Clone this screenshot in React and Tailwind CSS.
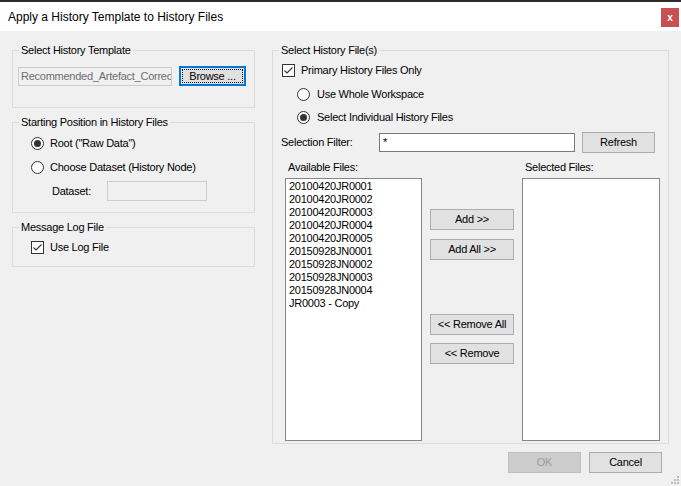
import React from "react";

const files = [
  "20100420JR0001",
  "20100420JR0002",
  "20100420JR0003",
  "20100420JR0004",
  "20100420JR0005",
  "20150928JN0001",
  "20150928JN0002",
  "20150928JN0003",
  "20150928JN0004",
  "JR0003 - Copy",
];

function Radio({ checked }) {
  return (
    <span className="w-[13px] h-[13px] rounded-full border border-[#333333] bg-white flex items-center justify-center shrink-0">
      {checked && <span className="w-[7px] h-[7px] rounded-full bg-[#333333]" />}
    </span>
  );
}

function Check() {
  return (
    <span className="w-[13px] h-[13px] border border-[#333333] bg-white flex items-center justify-center shrink-0">
      <svg width="11" height="11" viewBox="0 0 11 11">
        <path d="M1.5 5.5 L4 8 L9.5 2.5" fill="none" stroke="#333333" strokeWidth="1.1" />
      </svg>
    </span>
  );
}

function Btn({ children, className = "" }) {
  return (
    <button className={`h-[21px] bg-[#e1e1e1] border border-[#adadad] text-black flex items-center justify-center shrink-0 ${className}`}>
      {children}
    </button>
  );
}

function Group({ title, className = "", children }) {
  return (
    <fieldset className={`border border-[#dcdcdc] shrink-0 ${className}`}>
      <legend className="ml-[6px] px-[2px] leading-[14px] text-black">{title}</legend>
      {children}
    </fieldset>
  );
}

export default function App() {
  return (
    <div className="relative w-[681px] h-[486px] bg-[#f0f0f0] flex flex-col overflow-hidden text-[11px] text-black font-['Liberation_Sans',Arial,sans-serif]">
      <div className="h-[2px] bg-[#2b2b2b] shrink-0" />
      <div className="h-[29px] bg-white flex justify-between shrink-0">
        <span className="pl-[8px] self-center text-[12px]">Apply a History Template to History Files</span>
        <span className="mt-[6px] mr-[2px] w-[18px] h-[19px] bg-[#c75050] text-white text-[10px] font-bold flex items-center justify-center">
          x
        </span>
      </div>

      <div className="flex tracking-[-0.25px]">
        {/* left column */}
        <div className="flex flex-col ml-[12px] mt-[12px] w-[243px]">
          <Group title="Select History Template" className="h-[65px]">
            <div className="mt-[9px] h-[20px] pl-[5px] flex items-center gap-[7px]">
              <div className="w-[154px] h-[19px] border border-[#cccccc] bg-[#f0f0f0] pl-[2px] text-[#6d6d6d] overflow-hidden whitespace-nowrap leading-[17px]">
                Recommended_Artefact_Correc
              </div>
              <button className="w-[67px] h-[20px] border-2 border-[#0078d7] bg-[#e1e1e1] p-[1px] shrink-0">
                <span className="w-full h-full border border-dotted border-black flex items-center justify-center">
                  Browse ...
                </span>
              </button>
            </div>
          </Group>

          <Group title="Starting Position in History Files" className="h-[98px] mt-[7px]">
            <div className="mt-[2px] flex flex-col">
              <div className="h-[24px] pl-[18px] flex items-center gap-[6px]">
                <Radio checked />
                <span>Root ("Raw Data")</span>
              </div>
              <div className="h-[24px] pl-[18px] flex items-center gap-[6px]">
                <Radio />
                <span>Choose Dataset (History Node)</span>
              </div>
              <div className="h-[24px] pl-[39px] flex items-center">
                <span className="w-[55px]">Dataset:</span>
                <div className="w-[100px] h-[20px] border border-[#cccccc] bg-[#f0f0f0]" />
              </div>
            </div>
          </Group>

          <Group title="Message Log File" className="h-[47px] mt-[7px]">
            <div className="mt-[7px] h-[13px] pl-[18px] flex items-center gap-[6px]">
              <Check />
              <span>Use Log File</span>
            </div>
          </Group>
        </div>

        {/* right group */}
        <Group title="Select History File(s)" className="ml-[17px] mt-[12px] w-[397px] h-[401px]">
          <div className="flex flex-col">
            <div className="mt-[5px] h-[16px] pl-[9px] flex items-center gap-[6px]">
              <Check />
              <span>Primary History Files Only</span>
            </div>
            <div className="mt-[5px] h-[23px] pl-[24px] flex items-center gap-[7px]">
              <Radio />
              <span>Use Whole Workspace</span>
            </div>
            <div className="h-[23px] pl-[24px] flex items-center gap-[7px]">
              <Radio checked />
              <span>Select Individual History Files</span>
            </div>
            <div className="mt-[3px] h-[20px] pl-[8px] flex items-center">
              <span className="w-[98px]">Selection Filter:</span>
              <div className="w-[196px] h-[19px] border border-[#7a7a7a] bg-white pl-[3px] leading-[17px]">*</div>
              <Btn className="ml-[7px] w-[73px] h-[20px]">Refresh</Btn>
            </div>
            <div className="mt-[8px] h-[14px] pl-[15px] flex items-center">
              <span className="w-[237px]">Available Files:</span>
              <span>Selected Files:</span>
            </div>
            <div className="mt-[4px] h-[263px] pl-[12px] flex gap-[8px]">
              <div className="w-[137px] h-full border border-[#828790] bg-white pl-[3px] pt-[1px] flex flex-col">
                {files.map((f) => (
                  <span key={f} className="leading-[13px] whitespace-nowrap">
                    {f}
                  </span>
                ))}
              </div>
              <div className="w-[84px] flex flex-col">
                <Btn className="mt-[31px] w-[84px]">Add &gt;&gt;</Btn>
                <Btn className="mt-[9px] w-[84px]">Add All &gt;&gt;</Btn>
                <Btn className="mt-[54px] w-[84px]">&lt;&lt; Remove All</Btn>
                <Btn className="mt-[8px] w-[84px]">&lt;&lt; Remove</Btn>
              </div>
              <div className="w-[138px] h-full border border-[#828790] bg-white" />
            </div>
          </div>
        </Group>
      </div>

      <div className="mt-[8px] pr-[19px] flex justify-end gap-[8px] tracking-[-0.25px]">
        <button className="w-[73px] h-[21px] bg-[#cccccc] border border-[#bfbfbf] text-[#9d9d9d] flex items-center justify-center">
          OK
        </button>
        <Btn className="w-[73px]">Cancel</Btn>
      </div>

      <svg className="absolute right-[1px] bottom-[1px]" width="10" height="10" viewBox="0 0 10 10">
        <rect x="7" y="1" width="2" height="2" fill="#bcbcbc" />
        <rect x="4" y="4" width="2" height="2" fill="#bcbcbc" />
        <rect x="7" y="4" width="2" height="2" fill="#bcbcbc" />
        <rect x="1" y="7" width="2" height="2" fill="#bcbcbc" />
        <rect x="4" y="7" width="2" height="2" fill="#bcbcbc" />
        <rect x="7" y="7" width="2" height="2" fill="#bcbcbc" />
      </svg>
    </div>
  );
}
